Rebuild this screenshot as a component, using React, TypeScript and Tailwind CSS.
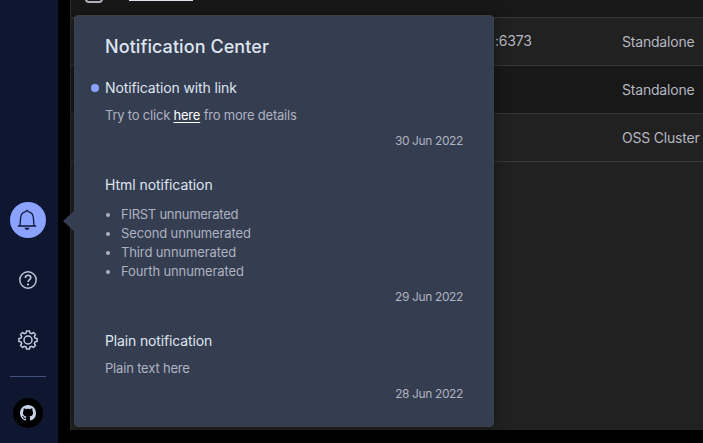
import React from "react";

const font = "font-['Inter','Liberation_Sans',sans-serif]";

// Outline of an eight-toothed cog centred on 10,10
const gearPath =
  Array.from({ length: 8 }, (_, i) => i * 45)
    .flatMap((a) => [
      [a - 15, 7.3],
      [a - 9, 9.2],
      [a + 9, 9.2],
      [a + 15, 7.3],
    ])
    .map(([a, r], i) => {
      const t = (a * Math.PI) / 180;
      return `${i ? "L" : "M"}${(10 + r * Math.cos(t)).toFixed(2)} ${(10 + r * Math.sin(t)).toFixed(2)}`;
    })
    .join("") + "Z";

function Sidebar() {
  return (
    <nav className="flex h-full w-[58px] shrink-0 flex-col items-center bg-[#0f1630] pr-[2px] pt-[202px] text-[#c3cbe0]">
      <button className="flex size-9 shrink-0 items-center justify-center rounded-full bg-[#8ba2ff] pr-[2px]">
        <svg width="20" height="22" viewBox="0 0 20 22" fill="none" stroke="#101a3a" strokeWidth="1.3">
          <path d="M.8 17h18.400M3 17l.6-8C3.800 5.300 6 3.300 8.600 2.700L10 1.300l1.400 1.400C14 3.300 16.200 5.300 16.400 9l.6 8" />
          <path d="M7.500 18.700h5c-.3 1.400-1.300 2-2.500 2s-2.200-.6-2.500-2z" fill="#101a3a" stroke="none" />
        </svg>
      </button>
      <button className="mt-6 flex size-9 shrink-0 items-center justify-center">
        <svg width="18" height="18" viewBox="0 0 18 18" fill="none" stroke="currentColor" strokeWidth="1.4">
          <circle cx="9" cy="9" r="8.2" />
          <path d="M6.300 7.100c0-1.700 1.100-2.800 2.800-2.800 1.600 0 2.700 1 2.700 2.400 0 2-2.700 2.100-2.700 4.300" strokeWidth="1.6" />
          <circle cx="9" cy="13.500" r="1.1" fill="currentColor" stroke="none" />
        </svg>
      </button>
      <button className="mt-6 flex size-9 shrink-0 items-center justify-center">
        <svg width="20" height="20" viewBox="0 0 20 20" fill="none" stroke="currentColor" strokeWidth="1.5" strokeLinejoin="round">
          <path d={gearPath} />
          <circle cx="10" cy="10" r="4" />
        </svg>
      </button>
      <div className="mt-[18px] h-px w-9 shrink-0 bg-[#405080]" />
      <a className="mt-[21px] flex size-[30px] shrink-0 items-center justify-center rounded-full bg-black">
        <svg width="16" height="16" viewBox="0 0 16 16" fill="#c8d3ea">
          <path d="M8 0C3.580 0 0 3.580 0 8c0 3.540 2.290 6.530 5.470 7.590.4.070.55-.17.55-.38 0-.19-.01-.82-.01-1.490-2.010.37-2.530-.49-2.690-.94-.09-.23-.48-.94-.82-1.130-.28-.15-.68-.52-.01-.53.63-.01 1.080.58 1.230.82.72 1.210 1.870.87 2.330.66.07-.52.28-.87.51-1.070-1.780-.2-3.640-.89-3.640-3.950 0-.87.31-1.590.82-2.150-.08-.2-.36-1.020.08-2.120 0 0 .67-.21 2.200.82.64-.18 1.320-.27 2-.27s1.360.09 2 .27c1.530-1.040 2.200-.82 2.200-.82.44 1.100.16 1.920.08 2.120.51.56.82 1.270.82 2.150 0 3.070-1.870 3.750-3.650 3.950.29.25.54.73.54 1.480 0 1.070-.01 1.930-.01 2.200 0 .21.15.46.55.38A8.010 8.010 0 0 0 16 8c0-4.420-3.580-8-8-8z" />
        </svg>
      </a>
    </nav>
  );
}

function Row({ host, kind, dark }: { host?: string; kind: string; dark?: boolean }) {
  return (
    <div className={`flex h-12 shrink-0 items-center border-b border-[#373737] text-[14px] tracking-[-0.2px] text-[#b5b6c0] ${dark ? "bg-[#181818]" : "bg-[#212121]"}`}>
      <span className="w-[551px] shrink-0 pb-[3px] pl-[424px]">{host}</span>
      <span className="whitespace-nowrap pb-px">{kind}</span>
    </div>
  );
}

function Table() {
  return (
    <main className="flex h-[430px] min-w-0 grow flex-col overflow-hidden border-l border-[#2c2c2c] bg-[#212121]">
      <div className="flex h-[18px] shrink-0 items-end overflow-hidden border-b border-[#373737] bg-[#181818] pb-[14px] pl-[14px]">
        <span className="size-[18px] shrink-0 rounded-[4px] border-2 border-[#b4b0bd]" />
        <span className="mb-[2px] ml-[26px] h-[15px] w-16 border-b border-[#dfe5ef]" />
      </div>
      <Row host=":6373" kind="Standalone" />
      <Row kind="Standalone" dark />
      <Row kind="OSS Cluster" />
    </main>
  );
}

function Stamp({ children }: { children: string }) {
  return <time className="block pt-[6px] text-right text-[12px] tracking-[-0.38px]">{children}</time>;
}

function Popover() {
  return (
    <section className="absolute left-[74px] top-[15px] h-[412px] w-[420px] rounded-[4px] border border-[#3c4049] bg-[#353d50] px-[30px] text-[13px] leading-[19px] text-[#aeb3c0] shadow-[0_0_14px_rgba(0,0,0,0.4)]">
      <span className="absolute -left-3 top-[194px] h-[22px] w-3 bg-[#353d50] [clip-path:polygon(100%_0,100%_100%,0_50%)]" />
      <h1 className="pt-[19px] text-[18px] font-medium leading-6 tracking-[0.07px] text-[#dfe5ef]">Notification Center</h1>
      <article className="pt-[19px]">
        <h2 className="relative text-[14px] leading-5 tracking-[-0.12px] text-[#dfe5ef]">
          <i className="absolute -left-[14px] top-[6px] size-2 rounded-full bg-[#8ba2ff]" />
          Notification with link
        </h2>
        <p className="pt-2 tracking-[-0.21px]">
          Try to click <a className="text-white underline underline-offset-2">here</a> fro more details
        </p>
        <Stamp>30 Jun 2022</Stamp>
      </article>
      <article className="pt-[25px]">
        <h2 className="text-[14px] leading-5 tracking-[-0.06px] text-[#dfe5ef]">Html notification</h2>
        <ul className="list-disc pl-4 pt-[10px] tracking-[-0.12px]">
          <li className="tracking-[-0.25px]">FIRST unnumerated</li>
          <li>Second unnumerated</li>
          <li>Third unnumerated</li>
          <li>Fourth unnumerated</li>
        </ul>
        <Stamp>29 Jun 2022</Stamp>
      </article>
      <article className="pt-[25px]">
        <h2 className="text-[14px] leading-5 tracking-[-0.14px] text-[#dfe5ef]">Plain notification</h2>
        <p className="pt-2 tracking-[-0.18px]">Plain text here</p>
        <Stamp>28 Jun 2022</Stamp>
      </article>
    </section>
  );
}

export default function App() {
  return (
    <div className={`relative flex h-[443px] w-[703px] overflow-hidden bg-black ${font}`}>
      <Sidebar />
      <div className="w-3 shrink-0" />
      <Table />
      <Popover />
    </div>
  );
}
